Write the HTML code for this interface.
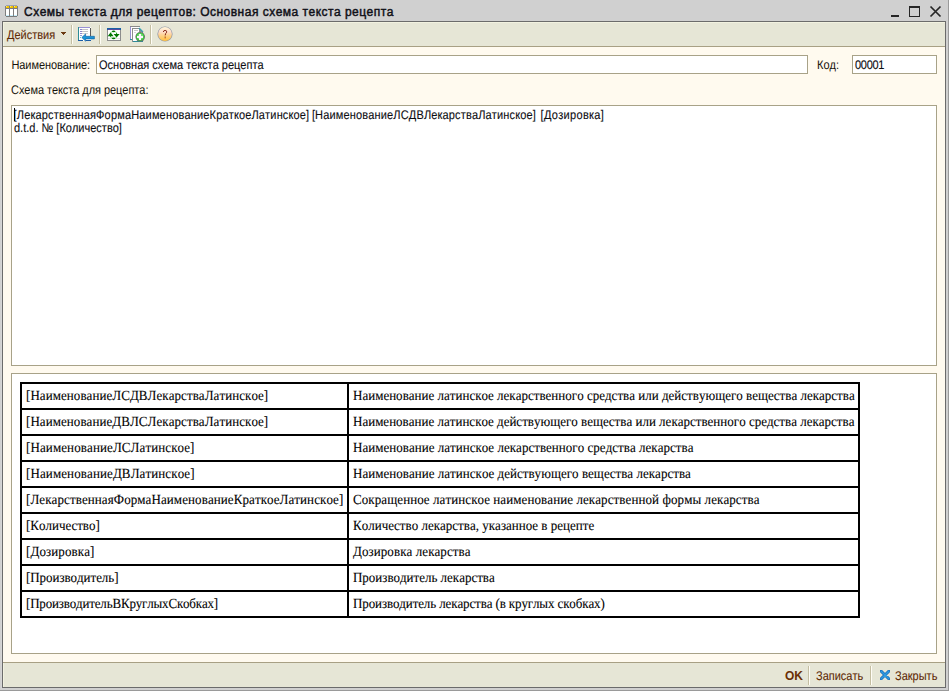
<!DOCTYPE html>
<html><head><meta charset="utf-8">
<style>
*{margin:0;padding:0;box-sizing:border-box}
html,body{width:949px;height:691px;overflow:hidden;background:#d0d0d0;font-family:"Liberation Sans",sans-serif;font-size:11px;font-kerning:none}
.a{position:absolute;white-space:pre}
.sy{transform:scaleY(1.14);transform-origin:0 0;text-rendering:geometricPrecision}
svg{position:absolute}
.ce rect{shape-rendering:crispEdges}
#frame{position:absolute;left:2px;top:21px;width:944px;height:667px;border:1px solid #6b6b6b;background:#fffaef}
#toolbar{position:absolute;left:3px;top:22px;width:942px;height:25px;background:#e6e6d6;border-bottom:1px solid #a8a084;box-shadow:inset 1px 1px 0 #f2f2e0}
#footer{position:absolute;left:3px;top:662px;width:942px;height:25px;background:#e6e6d6;border-top:1px solid #a8a084;box-shadow:inset 1px 0 0 #f2f2e0}
.inp{position:absolute;background:#fff;border:1px solid #a8a288}
.lbl{color:#15120a}
.ta{color:#0c0c10;-webkit-text-stroke:0.1px #0c0c10}
.btn{color:#5e2a06;-webkit-text-stroke:0.08px #5e2a06}
.hl{position:absolute;left:20px;width:840px;height:2px;background:#000}
.vl{position:absolute;top:382px;width:2px;height:236px;background:#000}
.tt{position:absolute;white-space:pre;font-family:"Liberation Serif",serif;font-size:13px;line-height:15px;color:#000;transform:scaleY(1.07);transform-origin:0 11.6px;text-rendering:geometricPrecision;-webkit-text-stroke:0.1px #000}
.sep{position:absolute;width:2px;border-left:1px solid #c4bea2;border-right:1px solid #fffdf6}
</style></head><body>
<!-- title bar icon -->
<svg class="ce" style="left:5px;top:5px" width="13" height="12" viewBox="0 0 13 12">
<rect x="1" y="0" width="11" height="1" fill="#9ea2b4"/>
<rect x="0" y="1" width="13" height="10" fill="#7e7e7e"/>
<rect x="1" y="11" width="11" height="1" fill="#7a7a7a"/>
<rect x="1" y="1" width="3" height="2" fill="#f5c400"/>
<rect x="5" y="1" width="3" height="2" fill="#f5c400"/>
<rect x="9" y="1" width="3" height="2" fill="#f5c400"/>
<rect x="1" y="1" width="1" height="1" fill="#fde870"/>
<rect x="5" y="1" width="1" height="1" fill="#fde870"/>
<rect x="9" y="1" width="1" height="1" fill="#fde870"/>
<rect x="1" y="4" width="3" height="6" fill="#fff"/>
<rect x="5" y="4" width="3" height="6" fill="#fff"/>
<rect x="9" y="4" width="3" height="6" fill="#fff"/>
<rect x="1" y="10" width="3" height="1" fill="#c8eefc"/>
<rect x="5" y="10" width="3" height="1" fill="#c8eefc"/>
<rect x="9" y="10" width="3" height="1" fill="#c8eefc"/>
</svg>
<div class="a" style="left:24px;top:5px;font-size:12px;color:#101018;letter-spacing:0.49px;-webkit-text-stroke:0.45px #101018">Схемы текста для рецептов: Основная схема текста рецепта</div>
<svg class="ce" style="left:886px;top:2px" width="60" height="19" viewBox="0 0 60 19">
<rect x="5" y="13" width="8" height="2" fill="#262626"/>
<rect x="23" y="4" width="11" height="11" fill="#262626"/>
<rect x="24" y="6" width="9" height="8" fill="#d0d0d0"/>
<path d="M44.5 4.5 L54.5 14.5 M54.5 4.5 L44.5 14.5" stroke="#262626" stroke-width="1.7" shape-rendering="geometricPrecision"/>
</svg>

<div id="frame"></div>
<div style="position:absolute;left:948px;top:0;width:1px;height:691px;background:#9a9a9a"></div>
<div style="position:absolute;left:0;top:690px;width:949px;height:1px;background:#9a9a9a"></div>
<div style="position:absolute;left:1px;top:21px;width:1px;height:668px;background:#d6d6d6"></div>
<div id="toolbar"></div>
<div class="a sy btn" style="left:7px;top:29px">Действия</div>
<svg class="ce" style="left:61px;top:32px" width="5" height="3"><path d="M0 0 H5 V1 H4 V2 H3 V3 H2 V2 H1 V1 H0 Z" fill="#6b3a12"/></svg>
<div class="sep" style="left:71px;top:25px;height:19px"></div>
<div class="sep" style="left:99px;top:25px;height:19px"></div>
<div class="sep" style="left:150px;top:25px;height:19px"></div>

<!-- icon 1: document with arrow -->
<svg class="ce" style="left:78px;top:27px" width="17" height="15" viewBox="0 0 17 15">
<rect x="0" y="0" width="13" height="14" fill="#fff"/>
<rect x="1" y="0" width="11" height="1" fill="#9890d4"/>
<rect x="0" y="0" width="1" height="13" fill="#2e8c98"/>
<rect x="12" y="1" width="1" height="8" fill="#5a5a5a"/>
<rect x="0" y="13" width="5" height="1" fill="#1a5ca6"/>
<rect x="8" y="13" width="5" height="1" fill="#1a5ca6"/>
<rect x="2" y="2" width="2" height="1" fill="#8a80cc"/><rect x="4" y="2" width="6" height="1" fill="#c4c4c4"/>
<rect x="2" y="4" width="2" height="1" fill="#8a80cc"/><rect x="4" y="4" width="6" height="1" fill="#c4c4c4"/>
<rect x="2" y="6" width="2" height="1" fill="#8a80cc"/><rect x="4" y="6" width="6" height="1" fill="#d0d0d0"/>
<rect x="2" y="8" width="2" height="1" fill="#8a9ad8"/>
<rect x="2" y="10" width="1" height="1" fill="#60c0c8"/>
<path d="M3.8 10.5 L7.6 6.9 L7.6 9.3 L16.4 9.3 L16.4 11.9 L7.6 11.9 L7.6 14.2 Z" fill="#1a94d8" stroke="#0c5a9a" stroke-width="0.6"/>
</svg>

<!-- icon 2: window with refresh -->
<svg class="ce" style="left:107px;top:28px" width="14" height="13" viewBox="0 0 14 13">
<rect x="0" y="0" width="14" height="13" fill="#8c8c8c"/>
<rect x="1" y="2" width="12" height="10" fill="#fff"/>
<rect x="0" y="0" width="14" height="2" fill="#1a62a6"/>
<rect x="1" y="1" width="12" height="1" fill="#5a4aa0"/>
<rect x="1" y="10" width="12" height="1" fill="#e4e4e4"/>
<g>
<circle cx="6.6" cy="6.9" r="3.6" fill="none" stroke="#7ad87a" stroke-width="0.7"/>
<ellipse cx="6.6" cy="3.4" rx="1.7" ry="0.8" fill="#007a00"/>
<ellipse cx="6.6" cy="10.4" rx="1.7" ry="0.8" fill="#007a00"/>
<path d="M0.6 8.2 L3.6 4.4 L6.6 8.2 Z" fill="#007800"/>
<path d="M6.6 6.0 L12.6 6.0 L9.6 9.6 Z" fill="#007800"/>
<rect x="3" y="7.5" width="1.2" height="1.6" fill="#2a9a2a"/>
<rect x="9" y="4.6" width="1.2" height="1.6" fill="#2a9a2a"/>
</g>
</svg>

<!-- icon 3: copy with plus -->
<svg class="ce" style="left:130px;top:26px" width="16" height="16" viewBox="0 0 16 16">
<rect x="0" y="0" width="10" height="14" fill="#8a8a8a"/>
<rect x="0" y="1" width="1" height="12" fill="#9890d4"/>
<rect x="1" y="1" width="9" height="12" fill="#fff"/>
<rect x="0" y="13" width="2" height="1" fill="#2e8c98"/>
<path d="M2 2 H9 L13 6 V16 H2 Z" fill="#8c8c8c"/>
<path d="M3 3 H9 V6 H12 V15 H3 Z" fill="#fff"/>
<rect x="3" y="15" width="10" height="1" fill="#2e8c98"/>
<path d="M9 2 L13 6" stroke="#3aa0b0" stroke-width="1.2" shape-rendering="geometricPrecision"/>
<rect x="4" y="4" width="4" height="1" fill="#c8c8c8"/>
<rect x="4" y="6" width="2" height="1" fill="#d8d8d8"/>
<g shape-rendering="geometricPrecision">
<circle cx="10.2" cy="10.8" r="4.8" fill="#6e6e6e"/>
<circle cx="10.2" cy="10.8" r="4.0" fill="#3ec83e"/>
<circle cx="10.2" cy="10.6" r="3.0" fill="#70dc70"/>
<rect x="9.2" y="8" width="2" height="5.6" fill="#fbf4fb"/>
<rect x="7.4" y="9.8" width="5.6" height="2" fill="#fbf4fb"/>
</g>
</svg>

<!-- icon 4: help -->
<svg style="left:157px;top:26px" width="17" height="17" viewBox="0 0 17 17">
<defs><linearGradient id="hg" x1="0" y1="0" x2="0" y2="1"><stop offset="0" stop-color="#fff6d8"/><stop offset="0.35" stop-color="#ffdcc8"/><stop offset="0.65" stop-color="#ffd080"/><stop offset="1" stop-color="#ffc040"/></linearGradient></defs>
<circle cx="8" cy="8" r="7.6" fill="#9096a8"/>
<circle cx="8" cy="8" r="6.9" fill="url(#hg)"/>
<path d="M6.3 6.0 Q6.5 4.4 8.1 4.4 Q9.8 4.5 9.7 5.9 Q9.6 6.9 8.6 7.6 L8.2 9.4" fill="none" stroke="#8a2a18" stroke-width="1.0"/>
<rect x="7.5" y="10.6" width="1.5" height="1.1" fill="#a85a20"/>
<rect x="7.5" y="12.2" width="1.5" height="0.8" fill="#ff9a30"/>
</svg>

<!-- form -->
<div class="a sy lbl" style="left:11.4px;top:59px;letter-spacing:-0.06px">Наименование:</div>
<div class="inp" style="left:96px;top:55px;width:712px;height:19px"></div>
<div class="a sy ta" style="left:99px;top:59px">Основная схема текста рецепта</div>
<div class="a sy lbl" style="left:817px;top:59px">Код:</div>
<div class="inp" style="left:852px;top:55px;width:85px;height:19px"></div>
<div class="a sy ta" style="left:855px;top:59px;letter-spacing:-0.3px">00001</div>
<div class="a sy lbl" style="left:11px;top:84px;letter-spacing:-0.05px">Схема текста для рецепта:</div>

<div class="inp" style="left:11px;top:105px;width:926px;height:261px"></div>
<div class="a sy ta" style="left:13.6px;top:109px;letter-spacing:0.166px">[ЛекарственнаяФормаНаименованиеКраткоеЛатинское]</div>
<div class="a sy ta" style="left:311.9px;top:109px;letter-spacing:0.155px">[НаименованиеЛСДВЛекарстваЛатинское]</div>
<div class="a sy ta" style="left:540.6px;top:109px;letter-spacing:0.33px">[Дозировка]</div>
<div class="a sy ta" style="left:14px;top:122px">d.t.d. № [Количество]</div>
<div style="position:absolute;left:14px;top:108px;width:1px;height:13px;background:#000"></div>

<div class="inp" style="left:11px;top:373px;width:926px;height:281px"></div>
<div id="tbl">
<div class="hl" style="top:382px"></div>
<div class="hl" style="top:408px"></div>
<div class="hl" style="top:434px"></div>
<div class="hl" style="top:460px"></div>
<div class="hl" style="top:486px"></div>
<div class="hl" style="top:512px"></div>
<div class="hl" style="top:538px"></div>
<div class="hl" style="top:564px"></div>
<div class="hl" style="top:590px"></div>
<div class="hl" style="top:616px"></div>
<div class="vl" style="left:20px"></div>
<div class="vl" style="left:347px"></div>
<div class="vl" style="left:858px"></div>
<div class="tt" style="left:26px;top:388px;letter-spacing:0.063px">[НаименованиеЛСДВЛекарстваЛатинское]</div>
<div class="tt" style="left:353px;top:388px;letter-spacing:0.009px">Наименование латинское лекарственного средства или действующего вещества лекарства</div>
<div class="tt" style="left:26px;top:414px;letter-spacing:0.063px">[НаименованиеДВЛСЛекарстваЛатинское]</div>
<div class="tt" style="left:353px;top:414px;letter-spacing:0.006px">Наименование латинское действующего вещества или лекарственного средства лекарства</div>
<div class="tt" style="left:26px;top:440px;letter-spacing:0.108px">[НаименованиеЛСЛатинское]</div>
<div class="tt" style="left:353px;top:440px;letter-spacing:0.025px">Наименование латинское лекарственного средства лекарства</div>
<div class="tt" style="left:26px;top:466px;letter-spacing:0.108px">[НаименованиеДВЛатинское]</div>
<div class="tt" style="left:353px;top:466px;letter-spacing:0.028px">Наименование латинское действующего вещества лекарства</div>
<div class="tt" style="left:26px;top:492px;letter-spacing:0.089px">[ЛекарственнаяФормаНаименованиеКраткоеЛатинское]</div>
<div class="tt" style="left:353px;top:492px;letter-spacing:0.086px">Сокращенное латинское наименование лекарственной формы лекарства</div>
<div class="tt" style="left:26px;top:518px;letter-spacing:0.018px">[Количество]</div>
<div class="tt" style="left:353px;top:518px;letter-spacing:0.013px">Количество лекарства, указанное в рецепте</div>
<div class="tt" style="left:26px;top:544px;letter-spacing:0.1px">[Дозировка]</div>
<div class="tt" style="left:353px;top:544px;letter-spacing:0.078px">Дозировка лекарства</div>
<div class="tt" style="left:26px;top:570px;letter-spacing:-0.05px">[Производитель]</div>
<div class="tt" style="left:353px;top:570px;letter-spacing:-0.014px">Производитель лекарства</div>
<div class="tt" style="left:26px;top:596px;letter-spacing:-0.176px">[ПроизводительВКруглыхСкобках]</div>
<div class="tt" style="left:353px;top:596px;letter-spacing:-0.117px">Производитель лекарства (в круглых скобках)</div>
</div>

<div id="footer"></div>
<div class="a" style="left:785px;top:669px;font-size:12px;font-weight:bold;color:#6a2e04">OK</div>
<div class="sep" style="left:808px;top:666px;height:19px"></div>
<div class="a sy btn" style="left:816px;top:670px">Записать</div>
<div class="sep" style="left:870px;top:666px;height:19px"></div>
<svg class="ce" style="left:880px;top:670px" width="10" height="10" viewBox="0 0 10 10" shape-rendering="geometricPrecision"><path d="M1.2 1.2 L8.8 8.8 M8.8 1.2 L1.2 8.8" stroke="#1466b8" stroke-width="3" stroke-linecap="round"/><path d="M1.2 1.2 L8.8 8.8 M8.8 1.2 L1.2 8.8" stroke="#2e9ae0" stroke-width="1.6" stroke-linecap="round"/></svg>
<div class="a sy btn" style="left:895px;top:670px">Закрыть</div>
</body></html>
